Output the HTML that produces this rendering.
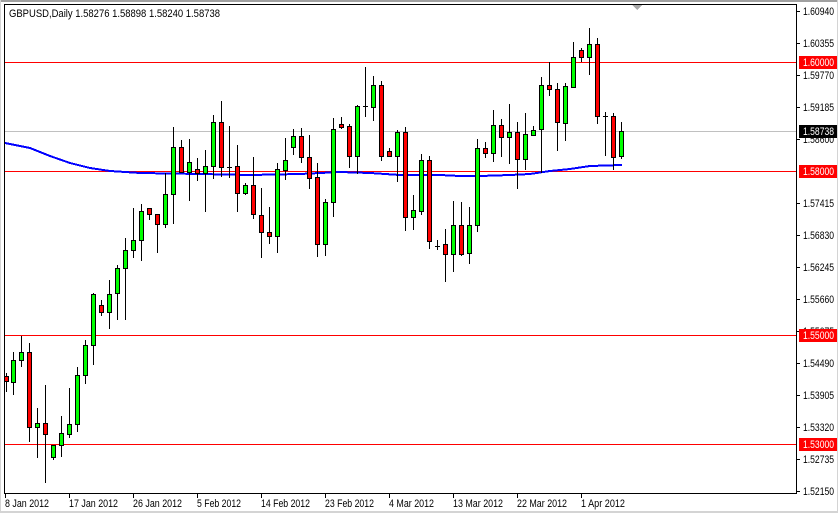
<!DOCTYPE html>
<html><head><meta charset="utf-8"><style>
html,body{margin:0;padding:0;background:#fff;}
svg{display:block;font-family:"Liberation Sans",Arial,sans-serif;}
</style></head><body>
<svg id="s" width="838" height="513" viewBox="0 0 838 513" xmlns="http://www.w3.org/2000/svg" shape-rendering="crispEdges">
<rect x="0" y="0" width="838" height="513" fill="#fff"/>
<rect x="0" y="0" width="838" height="2" fill="#a0a0a0"/>
<rect x="0" y="0" width="1" height="513" fill="#d4d4d4"/>
<rect x="837" y="0" width="1" height="513" fill="#d4d4d4"/>
<rect x="0" y="511" width="838" height="2" fill="#d4d4d4"/>
<polygon points="632,5 642,5 637,10" fill="#a8a8a8"/>
<g id="lines"></g>
<g id="candles"></g>
<rect x="4.5" y="4.5" width="792" height="489" fill="none" stroke="#000" stroke-width="1"/>
<text x="9" y="17" font-size="11" fill="#000" textLength="211" lengthAdjust="spacingAndGlyphs">GBPUSD,Daily  1.58276 1.58898 1.58240 1.58738</text>
<g id="axis" font-size="11"></g>
</svg>
<script>
var NS="http://www.w3.org/2000/svg";
function el(p,t,a,txt){var e=document.createElementNS(NS,t);for(var k in a)e.setAttribute(k,a[k]);if(txt!==undefined)e.textContent=txt;document.getElementById(p).appendChild(e);return e;}
el("lines","line",{x1:5,x2:796,y1:131.5,y2:131.5,stroke:"#c0c0c0"});
[62,171,335,444].forEach(function(y){el("lines","line",{x1:5,x2:796,y1:y+.5,y2:y+.5,stroke:"#ff0000"});});
var ma=[[5,143],[30,148],[50,156],[70,163],[90,168],[110,171],[140,173],[200,174],[250,175],[300,174],[340,172],[370,173],[400,175],[440,175],[460,176],[480,176],[510,175],[530,174],[550,171],[570,169],[590,166],[622,165]];
el("lines","polyline",{points:ma.map(function(p){return p.join(",")}).join(" "),fill:"none",stroke:"#0000ff","stroke-width":2});
var C=[[6,376,381,373,391,'r'],[13,360,382,352,394,'g'],[21,352,360,336,366,'g'],[29,352,427,343,441,'r'],[37,423,427,408,457,'g'],[45,423,434,385,482,'r'],[53,445,457,445,459,'g'],[61,433,445,416,456,'g'],[69,424,434,388,437,'g'],[77,375,424,367,431,'g'],[85,345,375,340,383,'g'],[93,294,345,293,364,'g'],[101,305,312,300,315,'r'],[109,294,312,280,328,'g'],[117,268,293,265,319,'g'],[125,250,268,238,319,'g'],[133,240,250,208,257,'g'],[141,211,240,204,260,'g'],[149,208,214,208,219,'r'],[157,214,224,214,252,'r'],[165,194,224,173,227,'g'],[173,147,194,127,223,'g'],[181,147,172,140,172,'r'],[189,162,172,139,200,'g'],[197,169,173,158,180,'r'],[205,166,173,150,211,'g'],[213,122,166,115,178,'g'],[221,122,167,101,176,'r'],[229,167,167,126,177,'d'],[237,166,193,145,211,'r'],[245,185,193,183,194,'g'],[253,185,214,157,218,'r'],[261,215,232,188,257,'r'],[269,232,236,207,243,'r'],[277,169,236,163,252,'g'],[285,160,170,138,179,'g'],[293,136,147,129,154,'g'],[301,136,157,128,162,'r'],[309,157,178,135,188,'r'],[317,177,244,163,256,'r'],[325,202,244,199,255,'g'],[333,129,202,118,216,'g'],[341,124,127,117,128,'r'],[349,126,156,124,167,'r'],[357,106,156,105,173,'g'],[365,106,106,67,116,'d'],[373,85,107,76,120,'g'],[381,85,156,81,160,'r'],[389,151,156,148,156,'r'],[397,132,156,130,181,'g'],[405,132,217,127,230,'r'],[413,210,217,195,229,'g'],[421,160,211,154,214,'g'],[429,160,241,156,248,'r'],[437,246,246,240,249,'d'],[445,244,254,229,281,'r'],[453,225,254,201,271,'g'],[461,225,254,202,255,'r'],[469,225,253,207,263,'g'],[477,148,225,139,231,'g'],[485,148,153,142,157,'r'],[493,125,153,110,161,'g'],[501,125,137,119,156,'r'],[509,132,137,104,163,'g'],[517,132,159,122,188,'r'],[525,134,159,113,169,'g'],[533,130,135,126,135,'g'],[541,85,129,77,172,'g'],[549,85,89,62,95,'r'],[557,89,122,83,150,'r'],[565,86,123,83,140,'g'],[573,57,87,42,87,'g'],[581,50,57,48,61,'r'],[589,44,57,28,74,'g'],[597,44,116,38,123,'r'],[605,116,116,112,155,'d'],[613,116,157,113,169,'r'],[621,131,156,122,158,'g']];
C.forEach(function(c){
 var x=c[0];
 el("candles","line",{x1:x+.5,x2:x+.5,y1:c[3],y2:c[4]+1,stroke:"#000"});
 if(c[5]=='d'){el("candles","line",{x1:x-2,x2:x+3,y1:c[1]+.5,y2:c[1]+.5,stroke:"#000"});}
 else{var h=Math.max(c[2]-c[1],2);el("candles","rect",{x:x-1.5,y:c[1]+.5,width:4,height:h,fill:c[5]=='g'?"#00ff00":"#ff0000",stroke:"#000"});}
});
var labs=[["1.60940",11],["1.60355",43],["1.59770",75],["1.59185",107],["1.58600",139],["1.57415",203],["1.56830",235],["1.56245",267],["1.55660",299],["1.55075",331],["1.54490",363],["1.53905",395],["1.53320",427],["1.52735",459],["1.52150",491]];
labs.forEach(function(l){el("axis","line",{x1:797,x2:800,y1:l[1]+.5,y2:l[1]+.5,stroke:"#000"});el("axis","text",{x:803,y:l[1]+4,fill:"#000",textLength:31,lengthAdjust:"spacingAndGlyphs"},l[0]);});
[["1.60000",62,"#ff0000"],["1.58000",171,"#ff0000"],["1.55000",335,"#ff0000"],["1.53000",444,"#ff0000"],["1.58738",131,"#000"]].forEach(function(b){
 el("axis","rect",{x:799,y:b[1]-6,width:38,height:13,fill:b[2]});
 el("axis","text",{x:803,y:b[1]+4,fill:"#fff",textLength:31,lengthAdjust:"spacingAndGlyphs"},b[0]);});
var d=[["8 Jan 2012",5,44],["17 Jan 2012",69,49],["26 Jan 2012",133,49],["5 Feb 2012",197,44],["14 Feb 2012",261,49],["23 Feb 2012",325,49],["4 Mar 2012",389,45],["13 Mar 2012",453,50],["22 Mar 2012",517,50],["1 Apr 2012",581,44]];
d.forEach(function(t){el("axis","line",{x1:t[1]+.5,x2:t[1]+.5,y1:494,y2:498,stroke:"#000"});el("axis","text",{x:t[1],y:507,fill:"#000",textLength:t[2],lengthAdjust:"spacingAndGlyphs"},t[0]);});
</script>
</body></html>
